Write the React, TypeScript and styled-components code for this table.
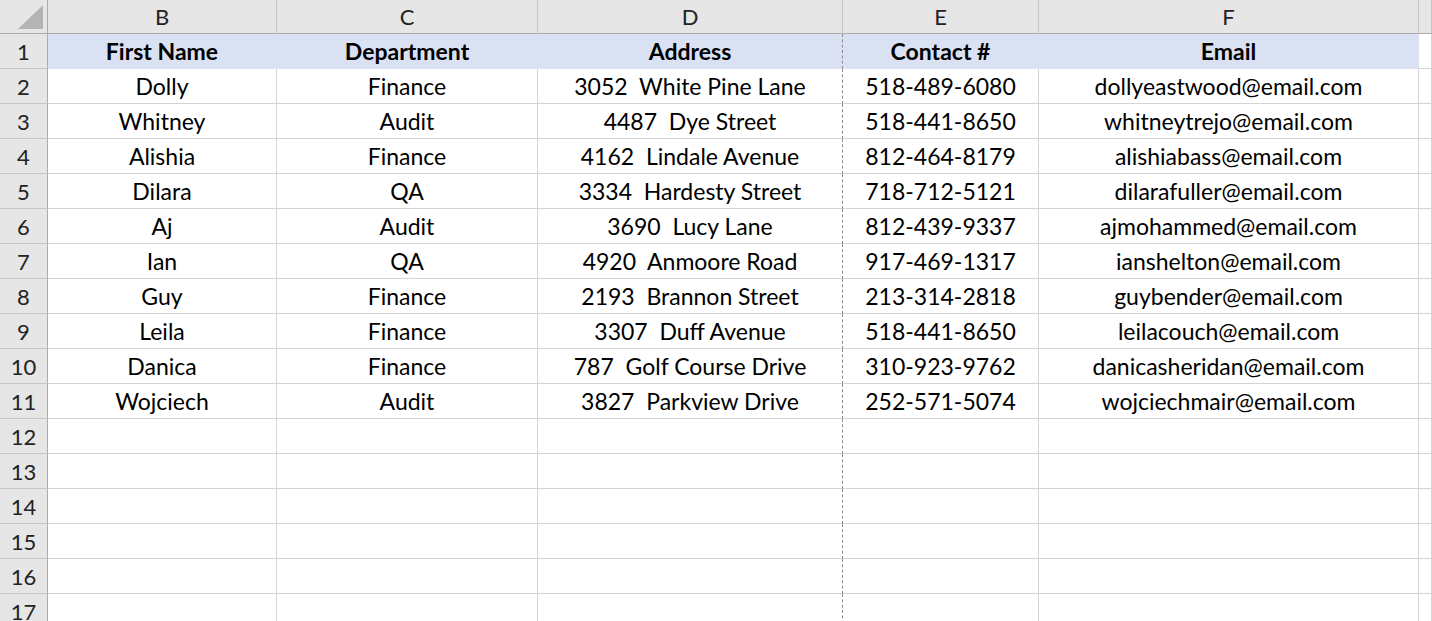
import styled, { createGlobalStyle } from "styled-components";

const GlobalStyle = createGlobalStyle`
  html, body {
    margin: 0;
    padding: 0;
    background: #ffffff;
    overflow: hidden;
  }
  body {
    font-family: Lato, "Open Sans", "Liberation Sans", sans-serif;
  }
`;

const Sheet = styled.div`
  display: grid;
  grid-template-columns: 48px 229px 261px 305px 196px 380px 1fr;
  grid-template-rows: 34px;
  grid-auto-rows: 35px;
  width: 1432px;
  height: 621px;
  overflow: hidden;
  font-size: 23px;
  color: #000;
`;

const Corner = styled.div`
  position: relative;
  background: #e6e6e6;
  border-right: 1px solid #ababab;
  border-bottom: 1px solid #ababab;

  svg {
    position: absolute;
    left: 18px;
    top: 5px;
  }
`;

const ColHead = styled.div`
  display: flex;
  align-items: center;
  justify-content: center;
  background: #e6e6e6;
  border-right: 1px solid #c6c6c6;
  border-bottom: 1px solid #ababab;
  color: #222;
  font-size: 22px;
`;

const RowHead = styled.div`
  display: flex;
  align-items: center;
  justify-content: center;
  background: #e6e6e6;
  border-right: 1px solid #ababab;
  border-bottom: 1px solid #c6c6c6;
  color: #222;
  font-size: 22px;
`;

const Cell = styled.div<{ $fill?: boolean; $bold?: boolean; $dashed?: boolean }>`
  display: flex;
  align-items: center;
  justify-content: center;
  white-space: pre;
  background: ${(p) => (p.$fill ? "#d9e1f2" : "#ffffff")};
  border-bottom: 1px solid ${(p) => (p.$fill ? "#d9e1f2" : "#d4d4d4")};
  border-right: 1px ${(p) => (p.$dashed ? "dashed #8a8a8a" : "solid")};
  border-right-color: ${(p) =>
    p.$dashed ? "#8a8a8a" : p.$fill ? "#d9e1f2" : "#d4d4d4"};
  font-weight: ${(p) => (p.$bold ? 700 : 400)};
`;

const columns = ["B", "C", "D", "E", "F", ""];
const headers = ["First Name", "Department", "Address", "Contact #", "Email"];

const data: string[][] = [
  ["Dolly", "Finance", "3052  White Pine Lane", "518-489-6080", "dollyeastwood@email.com"],
  ["Whitney", "Audit", "4487  Dye Street", "518-441-8650", "whitneytrejo@email.com"],
  ["Alishia", "Finance", "4162  Lindale Avenue", "812-464-8179", "alishiabass@email.com"],
  ["Dilara", "QA", "3334  Hardesty Street", "718-712-5121", "dilarafuller@email.com"],
  ["Aj", "Audit", "3690  Lucy Lane", "812-439-9337", "ajmohammed@email.com"],
  ["Ian", "QA", "4920  Anmoore Road", "917-469-1317", "ianshelton@email.com"],
  ["Guy", "Finance", "2193  Brannon Street", "213-314-2818", "guybender@email.com"],
  ["Leila", "Finance", "3307  Duff Avenue", "518-441-8650", "leilacouch@email.com"],
  ["Danica", "Finance", "787  Golf Course Drive", "310-923-9762", "danicasheridan@email.com"],
  ["Wojciech", "Audit", "3827  Parkview Drive", "252-571-5074", "wojciechmair@email.com"],
];

function App() {
  const rows: string[][] = [];
  for (let i = 0; i < 16; i++) rows.push(data[i] ?? ["", "", "", "", ""]);

  return (
    <>
      <GlobalStyle />
      <Sheet>
        <Corner>
          <svg width="25" height="24" viewBox="0 0 25 24">
            <polygon points="25,0 25,24 0,24" fill="#b4b4b4" />
          </svg>
        </Corner>
        {columns.map((c, i) => (
          <ColHead key={i}>{c}</ColHead>
        ))}

        <RowHead>1</RowHead>
        {headers.map((h, i) => (
          <Cell key={i} $fill $bold $dashed={i === 2}>
            {h}
          </Cell>
        ))}
        <Cell />

        {rows.map((r, ri) => (
          <>
            <RowHead key={"h" + ri}>{ri + 2}</RowHead>
            {r.map((v, ci) => (
              <Cell key={ri + "-" + ci} $dashed={ci === 2}>
                {v}
              </Cell>
            ))}
            <Cell key={ri + "-g"} />
          </>
        ))}
      </Sheet>
    </>
  );
}

export default App;
